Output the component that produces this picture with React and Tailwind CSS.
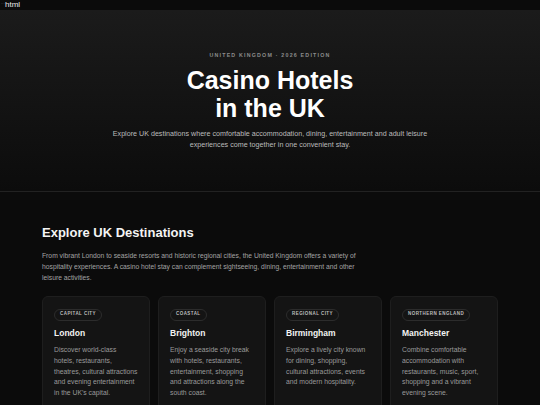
import React from "react";

const DESTINATIONS = [
  {
    tag: "Capital City",
    name: "London",
    text: "Discover world-class hotels, restaurants, theatres, cultural attractions and evening entertainment in the UK's capital.",
  },
  {
    tag: "Coastal",
    name: "Brighton",
    text: "Enjoy a seaside city break with hotels, restaurants, entertainment, shopping and attractions along the south coast.",
  },
  {
    tag: "Regional City",
    name: "Birmingham",
    text: "Explore a lively city known for dining, shopping, cultural attractions, events and modern hospitality.",
  },
  {
    tag: "Northern England",
    name: "Manchester",
    text: "Combine comfortable accommodation with restaurants, music, sport, shopping and a vibrant evening scene.",
  },
];

const DestinationCard = ({ tag, name, text }) => (
  <article className="flex flex-col items-start rounded-[6px] border border-[#1e1e1e] bg-[#141414] pl-[11px] pr-[11.2px] pt-[12px] pb-4">
    <span className="flex h-3 items-center rounded-full border border-[#2c2c2c] px-[5px] text-[4.5px] font-bold uppercase leading-none tracking-[0.45px] text-[#bdbdbd]">
      {tag}
    </span>
    <h3 className="mt-[7px] text-[8.5px] font-bold leading-[10px] text-[#f2f2f2]">{name}</h3>
    <p className="mt-[7.5px] text-[6.8px] leading-[10.8px] text-[#9a9a9a]">{text}</p>
  </article>
);

export default function App() {
  return (
    <div className="min-h-[405px] bg-[#0b0b0b] font-['Liberation_Sans',Arial,sans-serif]">
      {/* stray text */}
      <div className="h-[10px] px-[1px] text-[8px] leading-[10px] text-[#e8e8e8]">
        <span className="text-[4px] align-top text-[#9a9a9a]">```</span>html
      </div>

      {/* HERO */}
      <header className="flex flex-col items-center border-b border-[#222] bg-gradient-to-b from-[#1b1b1b] to-[#0c0c0c] px-6 pt-[42px] pb-[40px] text-center">
        <p className="text-[5.3px] font-bold uppercase leading-[6px] tracking-[1.2px] text-[#8c8c8c]">
          United Kingdom · 2026 Edition
        </p>
        <h1 className="mt-[8px] text-[25px] font-bold leading-[28px] text-white">
          Casino Hotels
          <br />
          in the UK
        </h1>
        <p className="mt-[6.5px] max-w-[330px] text-[7.15px] leading-[11px] text-[#bcbcbc]">
          Explore UK destinations where comfortable accommodation, dining, entertainment and adult leisure experiences come together in one convenient stay.
        </p>
      </header>

      {/* DESTINATIONS */}
      <section className="mx-auto max-w-[456px] pt-[33px] pb-10">
        <h2 className="text-[13px] font-bold leading-[16px] text-[#f4f4f4]">Explore UK Destinations</h2>
        <p className="mt-[9px] max-w-[330px] text-[6.75px] leading-[11px] text-[#a3a3a3]">
          From vibrant London to seaside resorts and historic regional cities, the United Kingdom offers a variety of hospitality experiences. A casino hotel stay can complement sightseeing, dining, entertainment and other leisure activities.
        </p>
        <div className="mt-[13px] grid grid-cols-4 gap-2">
          {DESTINATIONS.map((d) => (
            <DestinationCard key={d.name} {...d} />
          ))}
        </div>
      </section>
    </div>
  );
}
